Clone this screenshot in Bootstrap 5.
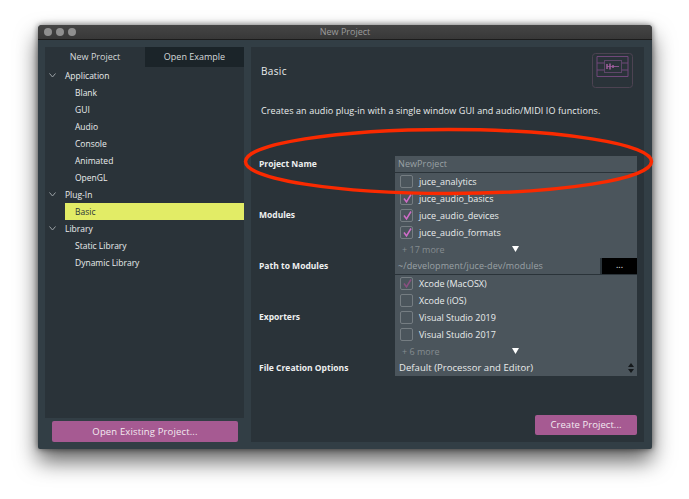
<!DOCTYPE html>
<html lang="en">
<head>
<meta charset="UTF-8">
<title>New Project</title>
<link href="https://cdn.jsdelivr.net/npm/bootstrap@5.3.0/dist/css/bootstrap.min.css" rel="stylesheet">
<style>
html, body { height: 100%; }
body { background: #fff; font-family: "Open Sans", "Liberation Sans", sans-serif; font-size: 9px; color: #e9ecec; padding: 25px 37px 0 38px; overflow: hidden; }
.win { position: relative; height: 424px; background: #323e45; border-radius: 4px 4px 2px 2px; box-shadow: 0 12px 22px rgba(0,0,0,.62), 0 0 6px rgba(0,0,0,.55); }
.titlebar { height: 15px; background: linear-gradient(#454545, #383838); border-bottom: 1px solid #1c1c1c; border-radius: 4px 4px 0 0; color: #9c9c9c; line-height: 14px; padding: 0 6px; }
.dot { width: 8px; height: 8px; border-radius: 50%; background: #8f8f8f; }
.title-txt { position: absolute; left: 0; right: 0; top: 0; text-align: center; }
.win-body { padding: 7px 7px 7px; height: 408px; gap: 7px; }
.side { width: 199px; }
.side-panel { background: #2a3339; height: 371px; }
.tab-item { width: 100px; height: 20px; line-height: 20px; text-align: center; color: #d5d9da; }
.tab-dark { width: 99px; background: #1b2429; }
.tree-row { height: 17px; line-height: 17px; padding-left: 30px; position: relative; font-size: 8.5px; }
.tree-head { padding-left: 20px; }
.tree-head svg { position: absolute; left: 4px; top: 6px; }
.tree-sel { background: #e2ec66; color: #2a3339; margin-left: 20px; padding-left: 10px; height: 17px; }
.purple-btn { background: #a65a92; color: #f3eaf1; border-radius: 2px; text-align: center; font-size: 9.5px; }
.btn-open { height: 21px; line-height: 21px; margin: 3px 6px 0 7px; letter-spacing: .15px; }
.main-panel { width: 393px; background: #2a3339; height: 395px; padding: 0 7px 0 8px; position: relative; }
.main-head { height: 48px; padding-left: 2px; }
.main-head h1 { font-size: 10px; font-weight: 400; margin: 0; padding-top: 18px; letter-spacing: .35px; }
.thumb { position: absolute; right: 10px; top: 6px; }
.desc { height: 61px; padding: 9px 0 0 2px; margin: 0; letter-spacing: .09px; }
.fld-label { width: 136px; font-weight: 700; font-size: 8.5px; align-self: center; color: #eef0f0; }
.fld-row { margin-bottom: 1px; }
.fld-row-tight { margin-bottom: 0; }
.fld-box { width: 242px; background: #4b555c; }
.txt-field { height: 16px; line-height: 16px; padding-left: 3px; color: #9aa1a5; letter-spacing: .1px; }
.chk-row { height: 17px; padding-left: 5px; gap: 6px; }
.chk { width: 13px; height: 13px; border: 1px solid #757d82; border-radius: 2px; position: relative; }
.chk svg { position: absolute; left: 1px; top: 0; }
.more-row { height: 17px; padding-left: 7px; color: #858c90; position: relative; }
.more-row svg { position: absolute; left: 117px; top: 5px; }
.fld-path { width: 205px; }
.dots-btn { width: 35px; margin-left: 2px; height: 16px; line-height: 14px; background: #000; text-align: center; }
.sel-field { height: 16px; line-height: 16px; padding: 0 4px; position: relative; font-size: 9.5px; letter-spacing: .05px; }
.sel-field svg { position: absolute; right: 3px; top: 2px; }
.btn-create { position: absolute; left: 284px; top: 368px; width: 102px; height: 20px; line-height: 20px; letter-spacing: .05px; }
.ring { position: absolute; left: 204px; top: 100px; pointer-events: none; }
</style>
</head>
<body>
<div class="win">
  <div class="titlebar d-flex align-items-center gap-1">
    <span class="dot"></span><span class="dot"></span><span class="dot"></span>
    <span class="title-txt">New Project</span>
  </div>
  <div class="win-body d-flex">
    <!-- left side -->
    <div class="side">
      <div class="side-panel">
        <div class="d-flex">
          <div class="tab-item">New Project</div>
          <div class="tab-item tab-dark">Open Example</div>
        </div>
        <div class="tree-row tree-head"><svg width="7" height="5" viewBox="0 0 7 5"><path d="M.5.5 3.5 4 6.5.5" fill="none" stroke="#9aa2a6"/></svg>Application</div>
        <div class="tree-row">Blank</div>
        <div class="tree-row">GUI</div>
        <div class="tree-row">Audio</div>
        <div class="tree-row">Console</div>
        <div class="tree-row">Animated</div>
        <div class="tree-row">OpenGL</div>
        <div class="tree-row tree-head"><svg width="7" height="5" viewBox="0 0 7 5"><path d="M.5.5 3.5 4 6.5.5" fill="none" stroke="#9aa2a6"/></svg>Plug-In</div>
        <div class="tree-row tree-sel">Basic</div>
        <div class="tree-row tree-head"><svg width="7" height="5" viewBox="0 0 7 5"><path d="M.5.5 3.5 4 6.5.5" fill="none" stroke="#9aa2a6"/></svg>Library</div>
        <div class="tree-row">Static Library</div>
        <div class="tree-row">Dynamic Library</div>
      </div>
      <div class="purple-btn btn-open">Open Existing Project...</div>
    </div>
    <!-- right side -->
    <div class="main-panel">
      <div class="main-head"><h1>Basic</h1></div>
      <svg class="thumb" width="42" height="35" viewBox="0 0 42 35" fill="none">
        <rect x=".5" y=".5" width="40" height="34" rx="3" stroke="#4d4352"/>
        <path d="M5 3.5H36M5 3.5V23.5H36V3.5M5 10H12M29 10H36M5 17H12M29 17H36" stroke="#70487a"/>
        <rect x="12.5" y="7.5" width="17" height="12" stroke="#5e4669"/>
        <path d="M15 13.5H27" stroke="#8a5590"/>
        <path d="M15 11v5M18 10.500v6M21 12v3" stroke="#a2609f" stroke-width="1.500"/>
      </svg>
      <p class="desc">Creates an audio plug-in with a single window GUI and audio/MIDI IO functions.</p>

      <div class="d-flex fld-row">
        <div class="fld-label">Project Name</div>
        <div class="fld-box txt-field">NewProject</div>
      </div>
      <div class="d-flex fld-row-tight">
        <div class="fld-label">Modules</div>
        <div class="fld-box">
          <div class="chk-row d-flex align-items-center"><span class="chk"></span>juce_analytics</div>
          <div class="chk-row d-flex align-items-center"><span class="chk"><svg width="11" height="11" viewBox="0 0 11 11"><path d="M2 5.500 4.500 9 9 1.500" fill="none" stroke="#d06cc8" stroke-width="1.500"/></svg></span>juce_audio_basics</div>
          <div class="chk-row d-flex align-items-center"><span class="chk"><svg width="11" height="11" viewBox="0 0 11 11"><path d="M2 5.500 4.500 9 9 1.500" fill="none" stroke="#d06cc8" stroke-width="1.500"/></svg></span>juce_audio_devices</div>
          <div class="chk-row d-flex align-items-center"><span class="chk"><svg width="11" height="11" viewBox="0 0 11 11"><path d="M2 5.500 4.500 9 9 1.500" fill="none" stroke="#d06cc8" stroke-width="1.500"/></svg></span>juce_audio_formats</div>
          <div class="more-row d-flex align-items-center">+ 17 more<svg width="7" height="6" viewBox="0 0 7 6"><path d="M0 0H7L3.500 6Z" fill="#fff"/></svg></div>
        </div>
      </div>
      <div class="d-flex fld-row">
        <div class="fld-label">Path to Modules</div>
        <div class="fld-box fld-path txt-field">~/development/juce-dev/modules</div>
        <div class="dots-btn">...</div>
      </div>
      <div class="d-flex fld-row-tight">
        <div class="fld-label">Exporters</div>
        <div class="fld-box">
          <div class="chk-row d-flex align-items-center"><span class="chk"><svg width="11" height="11" viewBox="0 0 11 11"><path d="M2 5.500 4.500 9 9 1.500" fill="none" stroke="#8a4f80" stroke-width="1.500"/></svg></span>Xcode (MacOSX)</div>
          <div class="chk-row d-flex align-items-center"><span class="chk"></span>Xcode (iOS)</div>
          <div class="chk-row d-flex align-items-center"><span class="chk"></span>Visual Studio 2019</div>
          <div class="chk-row d-flex align-items-center"><span class="chk"></span>Visual Studio 2017</div>
          <div class="more-row d-flex align-items-center">+ 6 more<svg width="7" height="6" viewBox="0 0 7 6"><path d="M0 0H7L3.500 6Z" fill="#fff"/></svg></div>
        </div>
      </div>
      <div class="d-flex">
        <div class="fld-label">File Creation Options</div>
        <div class="fld-box sel-field">Default (Processor and Editor)<svg width="6" height="12" viewBox="0 0 6 12"><path d="M3 1 6 5H0ZM3 11 0 7H6Z" fill="#15191c"/></svg></div>
      </div>
      <div class="purple-btn btn-create">Create Project...</div>
    </div>
  </div>
  <!-- red marker drawn over the window -->
  <svg class="ring" width="415" height="72" viewBox="0 0 415 72" fill="none">
    <ellipse cx="206.500" cy="36.500" rx="203" ry="32" stroke="#fa2a00" stroke-width="3.500"/>
  </svg>
</div>
<script src="https://cdn.jsdelivr.net/npm/bootstrap@5.3.0/dist/js/bootstrap.bundle.min.js"></script>
</body>
</html>
